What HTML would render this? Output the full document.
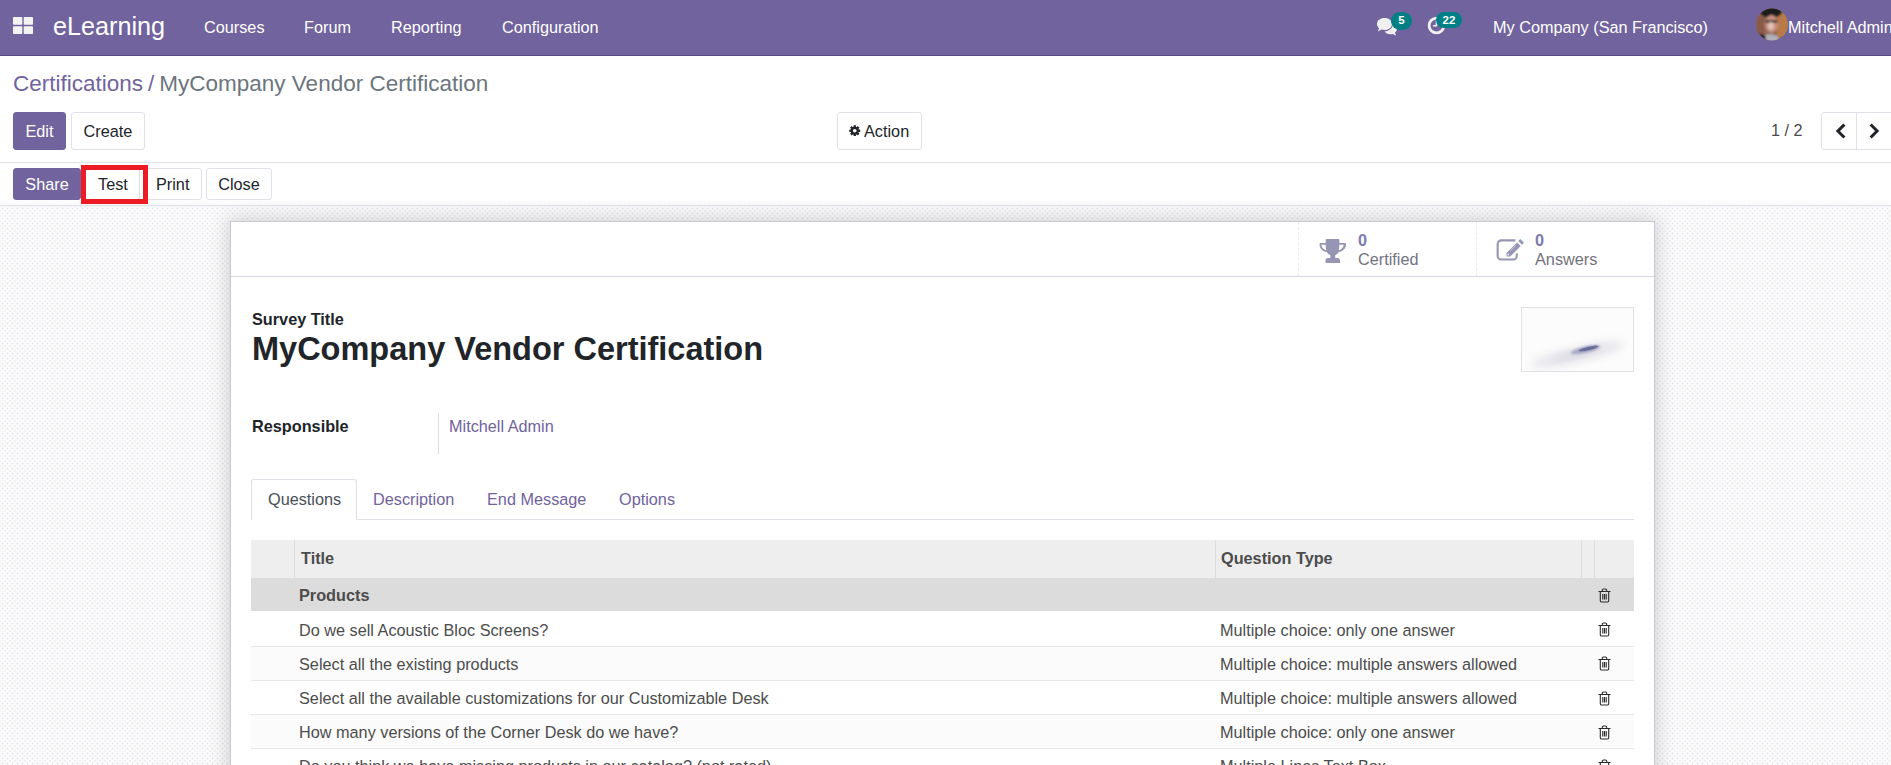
<!DOCTYPE html>
<html><head><meta charset="utf-8">
<style>
*{box-sizing:border-box;margin:0;padding:0}
html,body{width:1891px;height:765px;overflow:hidden;background:#fff;font-family:"Liberation Sans",sans-serif;color:#4c4c4c}
.a{position:absolute;white-space:nowrap}
</style></head>
<body>
<div class="a" style="left:0px;top:0px;width:1891px;height:55px;background:#71639e"></div>
<div class="a" style="left:0px;top:55px;width:1891px;height:1px;background:#574a80"></div>
<svg class="a" style="left:13px;top:17px" width="20" height="17" viewBox="0 0 20 17"><rect x="0" y="0" width="9.3" height="7.7" rx="0.8" fill="#f3f3f3"/><rect x="10.7" y="0" width="9.3" height="7.7" rx="0.8" fill="#f3f3f3"/><rect x="0" y="9.3" width="9.3" height="7.7" rx="0.8" fill="#f3f3f3"/><rect x="10.7" y="9.3" width="9.3" height="7.7" rx="0.8" fill="#f3f3f3"/></svg>
<div class="a" style="left:53px;top:12px;font-size:25.2px;line-height:28.98px;color:#fff;">eLearning</div>
<div class="a" style="left:204px;top:18px;font-size:16.25px;line-height:18.69px;color:#fff;">Courses</div>
<div class="a" style="left:304px;top:18px;font-size:16.25px;line-height:18.69px;color:#fff;">Forum</div>
<div class="a" style="left:391px;top:18px;font-size:16.25px;line-height:18.69px;color:#fff;">Reporting</div>
<div class="a" style="left:502px;top:18px;font-size:16.25px;line-height:18.69px;color:#fff;">Configuration</div>
<div class="a" style="left:1493px;top:18px;font-size:16.25px;line-height:18.69px;color:#fff;">My Company (San Francisco)</div>
<div class="a" style="left:1788px;top:18px;font-size:16.25px;line-height:18.69px;color:#fff;">Mitchell Admin</div>
<svg class="a" style="left:1376px;top:17px" width="22" height="19" viewBox="0 0 22 19"><path fill="#f0f0f0" d="M8.5 1C4 1 1 3.6 1 7c0 1.7.8 3.2 2.1 4.3L1.8 14.5 5.6 12.6c.9.3 1.9.4 2.9.4 4.5 0 7.5-2.6 7.5-6S13 1 8.5 1z"/><path fill="#f0f0f0" d="M16.8 7.2c0 3.9-3.6 6.9-8.3 7.3 1.1 1.6 3.3 2.7 5.8 2.7.8 0 1.6-.1 2.3-.3l3.4 1.6-1-2.9c1.2-.9 1.9-2.1 1.9-3.5 0-2-1.6-3.8-4-4.6z"/></svg>
<div class="a" style="left:1391px;top:11.5px;width:21px;height:18.5px;background:#008084;border-radius:10px"></div>
<div class="a" style="left:1391px;top:14px;font-size:11.5px;line-height:13.22px;color:#fff;font-weight:bold;width:21px;text-align:center;">5</div>
<svg class="a" style="left:1427px;top:16px" width="19" height="19" viewBox="0 0 19 19"><circle cx="9.5" cy="9.5" r="7.4" fill="none" stroke="#f0f0f0" stroke-width="2.8"/><path d="M9.5 4.5v5.3H6" fill="none" stroke="#f0f0f0" stroke-width="1.6"/></svg>
<div class="a" style="left:1436px;top:12px;width:26px;height:16px;background:#008084;border-radius:8px"></div>
<div class="a" style="left:1436px;top:14px;font-size:11.5px;line-height:13.22px;color:#fff;font-weight:bold;width:26px;text-align:center;">22</div>
<svg class="a" style="left:1756px;top:8px" width="32" height="33" viewBox="0 0 32 33"><defs><clipPath id="av"><circle cx="16" cy="16.5" r="16"/></clipPath><filter id="avb"><feGaussianBlur stdDeviation="0.9"/></filter></defs><g clip-path="url(#av)"><rect width="32" height="33" fill="#8e6452"/><g filter="url(#avb)"><rect x="21" y="5" width="13" height="24" fill="#b87a48"/><rect x="0" y="8" width="8" height="20" fill="#8a5a48"/><ellipse cx="15" cy="4" rx="11" ry="6" fill="#1e1a1a"/><ellipse cx="15.5" cy="16" rx="6.5" ry="9" fill="#c89080"/><rect x="9.5" y="12" width="12" height="3" fill="#503838"/><ellipse cx="15" cy="18" rx="3" ry="4" fill="#e0c0b8"/><ellipse cx="14" cy="31" rx="9" ry="5" fill="#b0b0b8"/><ellipse cx="5" cy="30" rx="5" ry="4" fill="#2a2222"/></g></g></svg>
<div class="a" style="left:0px;top:198px;width:1891px;height:7px;background:linear-gradient(#ffffff,#fafafa)"></div>
<div class="a" style="left:13px;top:71px;font-size:22.5px;line-height:26px;color:#71639e">Certifications<span style="margin-left:5px">/</span><span style="margin-left:5px;color:#6c757d">MyCompany Vendor Certification</span></div>
<div class="a" style="left:13px;top:112px;width:53px;height:38px;background:#71639e;color:#fff;border:1px solid #71639e;border-radius:3px;font-size:16.25px;line-height:36px;text-align:center">Edit</div>
<div class="a" style="left:71px;top:112px;width:74px;height:38px;background:#fff;color:#212529;border:1px solid #dee2e6;border-radius:3px;font-size:16.25px;line-height:36px;text-align:center">Create</div>
<div class="a" style="left:837px;top:112px;width:85px;height:38px;background:#fff;color:#212529;border:1px solid #dee2e6;border-radius:3px;font-size:16.25px;line-height:36px;text-align:center"></div>
<div class="a" style="left:864px;top:122px;font-size:16.25px;line-height:18.69px;color:#212529;">Action</div>
<div class="a" style="left:1771px;top:121px;font-size:16.25px;line-height:18.69px;color:#4c4c4c;">1 / 2</div>
<div class="a" style="left:1821px;top:112px;width:80px;height:38px;border:1px solid #dee2e6;border-radius:3px;background:#fff"></div>
<div class="a" style="left:1856px;top:112px;width:1px;height:38px;background:#dee2e6"></div>
<svg class="a" style="left:1834px;top:123px" width="12" height="16" viewBox="0 0 12 16"><path d="M9.3 2.6L3.9 8l5.4 5.4" fill="none" stroke="#212529" stroke-width="3" stroke-linecap="square" stroke-linejoin="miter"/></svg>
<svg class="a" style="left:1868px;top:123px" width="12" height="16" viewBox="0 0 12 16"><path d="M3.7 2.6L9.1 8l-5.4 5.4" fill="none" stroke="#212529" stroke-width="3" stroke-linecap="square" stroke-linejoin="miter"/></svg>
<svg class="a" style="left:849px;top:124.5px" width="11.5" height="11.5" viewBox="-6.3 -6.3 12.6 12.6"><g fill="#212529"><rect x="-1.3" y="-6" width="2.6" height="3" transform="rotate(0)"/><rect x="-1.3" y="-6" width="2.6" height="3" transform="rotate(45)"/><rect x="-1.3" y="-6" width="2.6" height="3" transform="rotate(90)"/><rect x="-1.3" y="-6" width="2.6" height="3" transform="rotate(135)"/><rect x="-1.3" y="-6" width="2.6" height="3" transform="rotate(180)"/><rect x="-1.3" y="-6" width="2.6" height="3" transform="rotate(225)"/><rect x="-1.3" y="-6" width="2.6" height="3" transform="rotate(270)"/><rect x="-1.3" y="-6" width="2.6" height="3" transform="rotate(315)"/><circle r="4.4"/></g><circle r="2" fill="#fff"/></svg>
<div class="a" style="left:0px;top:162px;width:1891px;height:1px;background:#dee2e6"></div>
<div class="a" style="left:13px;top:168px;width:68px;height:32px;background:#71639e;color:#fff;border:1px solid #71639e;border-radius:3px;font-size:16.25px;line-height:30px;text-align:center">Share</div>
<div class="a" style="left:81px;top:168px;width:59px;height:32px;background:#fff;color:#212529;border:1px solid #dee2e6;border-radius:3px;font-size:16.25px;line-height:30px;text-align:center"></div>
<div class="a" style="left:139px;top:168px;width:63px;height:32px;background:#fff;color:#212529;border:1px solid #dee2e6;border-radius:3px;font-size:16.25px;line-height:30px;text-align:center"></div>
<div class="a" style="left:98px;top:175px;font-size:16.25px;line-height:18.69px;color:#212529;">Test</div>
<div class="a" style="left:156px;top:175px;font-size:16.25px;line-height:18.69px;color:#212529;">Print</div>
<div class="a" style="left:206px;top:168px;width:66px;height:32px;background:#fff;color:#212529;border:1px solid #dee2e6;border-radius:3px;font-size:16.25px;line-height:30px;text-align:center">Close</div>
<div class="a" style="left:81px;top:165px;width:67px;height:39px;border:5px solid #ed1c24"></div>
<div class="a" style="left:0px;top:206px;width:1891px;height:559px;background-color:#fcfcfc;background-image:radial-gradient(circle,#e6e8ec 0.8px,transparent 1.3px),radial-gradient(circle,#e6e8ec 0.8px,transparent 1.3px);background-size:5px 5px;background-position:0 0,2.5px 2.5px"></div>
<div class="a" style="left:0px;top:205px;width:1891px;height:1px;background:#dee2e6"></div>
<div class="a" style="left:230px;top:221px;width:1425px;height:600px;background:#fff;border:1px solid #c9c8d6;box-shadow:0 0 18px 2px rgba(0,0,0,.16)"></div>
<div class="a" style="left:231px;top:276px;width:1423px;height:1px;background:#d8d8e2"></div>
<div class="a" style="left:1298px;top:222px;width:1px;height:54px;border-left:1px dashed #ebebf0"></div>
<div class="a" style="left:1476px;top:222px;width:1px;height:54px;border-left:1px dashed #ebebf0"></div>
<svg class="a" style="left:1319px;top:239px" width="27" height="24" viewBox="0 0 27 24"><path fill="#9696b4" d="M7.8 0h11.4c.8 0 1.2.5 1.2 1.2V4h5.4c.7 0 1.2.5 1.2 1.2 0 4.3-3.2 7.4-7.2 7.9-.9 1.5-2.2 2.6-3.6 3.1V19h2.4c1.5 0 2.4 1 2.4 2.4V24H6.5v-2.6C6.5 20 7.4 19 8.9 19h2.4v-2.8c-1.4-.5-2.7-1.6-3.6-3.1C3.7 12.6.5 9.5.5 5.2.5 4.5 1 4 1.7 4h5V1.2C6.6.5 7 0 7.8 0zM2.3 5.7c.3 2.6 2.3 4.9 4.9 5.6-.3-1.6-.5-3.5-.5-5.6zM20.3 5.7c0 2.1-.2 4-.5 5.6 2.6-.7 4.6-3 4.9-5.6z"/></svg>
<div class="a" style="left:1358px;top:231px;font-size:16.25px;line-height:18.69px;color:#7c7bad;font-weight:bold;">0</div>
<div class="a" style="left:1358px;top:250px;font-size:16.25px;line-height:18.69px;color:#727280;">Certified</div>
<svg class="a" style="left:1496px;top:239px" width="29" height="23" viewBox="0 0 29 23"><path fill="none" stroke="#9696b4" stroke-width="2.1" d="M19.4 1.35H5.2C3.2 1.35 1.65 2.9 1.65 4.9v12c0 2 1.55 3.55 3.55 3.55h12c2 0 3.55-1.55 3.55-3.55v-2.7"/><path fill="#9696b4" d="M10.5 17.6v-3.7L21 3.4l3.7 3.7-10.5 10.5z"/><path fill="#9696b4" d="M22.3 2.1l2-2 3.7 3.7-2 2z"/><path fill="none" stroke="#fff" stroke-width="0.7" opacity="0.7" d="M14.6 11.6l5.2-5.2"/><path fill="#fff" opacity="0.8" d="M11.6 16.5v-1.6l1.3-.3.3 1.6z"/></svg>
<div class="a" style="left:1535px;top:231px;font-size:16.25px;line-height:18.69px;color:#7c7bad;font-weight:bold;">0</div>
<div class="a" style="left:1535px;top:250px;font-size:16.25px;line-height:18.69px;color:#727280;">Answers</div>
<div class="a" style="left:252px;top:310px;font-size:16.25px;line-height:18.69px;color:#212529;font-weight:bold;">Survey Title</div>
<div class="a" style="left:252px;top:331px;font-size:32.5px;line-height:37.38px;color:#212529;font-weight:bold;">MyCompany Vendor Certification</div>
<div class="a" style="left:1521px;top:307px;width:113px;height:65px;border:1px solid #dee2e6;background:#fcfcfc"></div>
<svg class="a" style="left:1522px;top:308px" width="111" height="63" viewBox="0 0 111 63"><defs><filter id="b1" x="-50%" y="-50%" width="200%" height="200%"><feGaussianBlur stdDeviation="5"/></filter><filter id="b2" x="-50%" y="-50%" width="200%" height="200%"><feGaussianBlur stdDeviation="1.2"/></filter><filter id="b3" x="-50%" y="-50%" width="200%" height="200%"><feGaussianBlur stdDeviation="0.6"/></filter></defs><g transform="rotate(-13 58 44)"><ellipse cx="55" cy="46" rx="48" ry="7" fill="#e4e4ea" filter="url(#b1)"/><ellipse cx="55" cy="45" rx="26" ry="3" fill="#d6d6e0" filter="url(#b1)"/><ellipse cx="64" cy="43" rx="15" ry="3.2" fill="#a8a8c8" filter="url(#b2)"/><ellipse cx="67" cy="42.5" rx="10" ry="1.8" fill="#6a6a98" filter="url(#b3)"/></g></svg>
<div class="a" style="left:252px;top:417px;font-size:16.25px;line-height:18.69px;color:#212529;font-weight:bold;">Responsible</div>
<div class="a" style="left:438px;top:413px;width:1px;height:41px;background:#dcdcdc"></div>
<div class="a" style="left:449px;top:417px;font-size:16.25px;line-height:18.69px;color:#71639e;">Mitchell Admin</div>
<div class="a" style="left:251px;top:519px;width:1383px;height:1px;background:#dee2e6"></div>
<div class="a" style="left:251px;top:479px;width:106px;height:41px;background:#fff;border:1px solid #dee2e6;border-bottom:none;border-radius:3px 3px 0 0"></div>
<div class="a" style="left:268px;top:490px;font-size:16.25px;line-height:18.69px;color:#495057;">Questions</div>
<div class="a" style="left:373px;top:490px;font-size:16.25px;line-height:18.69px;color:#71639e;">Description</div>
<div class="a" style="left:487px;top:490px;font-size:16.25px;line-height:18.69px;color:#71639e;">End Message</div>
<div class="a" style="left:619px;top:490px;font-size:16.25px;line-height:18.69px;color:#71639e;">Options</div>
<div class="a" style="left:251px;top:540px;width:1383px;height:38px;background:#eeeeee"></div>
<div class="a" style="left:294px;top:540px;width:1px;height:38px;background:#dcdcdc"></div>
<div class="a" style="left:1215px;top:540px;width:1px;height:38px;background:#dcdcdc"></div>
<div class="a" style="left:1581px;top:540px;width:1px;height:38px;background:#dcdcdc"></div>
<div class="a" style="left:1594px;top:540px;width:1px;height:38px;background:#dcdcdc"></div>
<div class="a" style="left:301px;top:549px;font-size:16.25px;line-height:18.69px;color:#4c4c4c;font-weight:bold;">Title</div>
<div class="a" style="left:1221px;top:549px;font-size:16.25px;line-height:18.69px;color:#4c4c4c;font-weight:bold;">Question Type</div>
<div class="a" style="left:251px;top:578px;width:1383px;height:33px;background:#dcdcdc"></div>
<div class="a" style="left:299px;top:586px;font-size:16.25px;line-height:18.69px;color:#4c4c4c;font-weight:bold;">Products</div>
<div class="a" style="left:251px;top:612px;width:1383px;height:35px;background:#fff;"></div>
<div class="a" style="left:299px;top:621px;font-size:16.25px;line-height:18.69px;color:#4c4c4c;">Do we sell Acoustic Bloc Screens?</div>
<div class="a" style="left:1220px;top:621px;font-size:16.25px;line-height:18.69px;color:#4c4c4c;">Multiple choice: only one answer</div>
<div class="a" style="left:251px;top:646px;width:1383px;height:35px;background:#fbfbfb;border-top:1px solid #e6e6e6"></div>
<div class="a" style="left:299px;top:655px;font-size:16.25px;line-height:18.69px;color:#4c4c4c;">Select all the existing products</div>
<div class="a" style="left:1220px;top:655px;font-size:16.25px;line-height:18.69px;color:#4c4c4c;">Multiple choice: multiple answers allowed</div>
<div class="a" style="left:251px;top:680px;width:1383px;height:35px;background:#fff;border-top:1px solid #e6e6e6"></div>
<div class="a" style="left:299px;top:689px;font-size:16.25px;line-height:18.69px;color:#4c4c4c;">Select all the available customizations for our Customizable Desk</div>
<div class="a" style="left:1220px;top:689px;font-size:16.25px;line-height:18.69px;color:#4c4c4c;">Multiple choice: multiple answers allowed</div>
<div class="a" style="left:251px;top:714px;width:1383px;height:35px;background:#fbfbfb;border-top:1px solid #e6e6e6"></div>
<div class="a" style="left:299px;top:723px;font-size:16.25px;line-height:18.69px;color:#4c4c4c;">How many versions of the Corner Desk do we have?</div>
<div class="a" style="left:1220px;top:723px;font-size:16.25px;line-height:18.69px;color:#4c4c4c;">Multiple choice: only one answer</div>
<div class="a" style="left:251px;top:748px;width:1383px;height:35px;background:#fff;border-top:1px solid #e6e6e6"></div>
<div class="a" style="left:299px;top:757px;font-size:16.25px;line-height:18.69px;color:#4c4c4c;">Do you think we have missing products in our catalog? (not rated)</div>
<div class="a" style="left:1220px;top:757px;font-size:16.25px;line-height:18.69px;color:#4c4c4c;">Multiple Lines Text Box</div>
<svg class="a" style="left:1598px;top:588px" width="13" height="15" viewBox="0 0 13 15"><path fill="none" stroke="#2a2a2a" stroke-width="1.1" d="M.5 3.5h12M4.3 3.5V2.2c0-.7.5-1.2 1.2-1.2h2c.7 0 1.2.5 1.2 1.2v1.3M2.3 3.5v9.3c0 .7.4 1.2 1 1.2h6.4c.6 0 1-.5 1-1.2V3.5M4.8 6v5.5M6.5 6v5.5M8.2 6v5.5"/></svg>
<svg class="a" style="left:1598px;top:622px" width="13" height="15" viewBox="0 0 13 15"><path fill="none" stroke="#2a2a2a" stroke-width="1.1" d="M.5 3.5h12M4.3 3.5V2.2c0-.7.5-1.2 1.2-1.2h2c.7 0 1.2.5 1.2 1.2v1.3M2.3 3.5v9.3c0 .7.4 1.2 1 1.2h6.4c.6 0 1-.5 1-1.2V3.5M4.8 6v5.5M6.5 6v5.5M8.2 6v5.5"/></svg>
<svg class="a" style="left:1598px;top:656px" width="13" height="15" viewBox="0 0 13 15"><path fill="none" stroke="#2a2a2a" stroke-width="1.1" d="M.5 3.5h12M4.3 3.5V2.2c0-.7.5-1.2 1.2-1.2h2c.7 0 1.2.5 1.2 1.2v1.3M2.3 3.5v9.3c0 .7.4 1.2 1 1.2h6.4c.6 0 1-.5 1-1.2V3.5M4.8 6v5.5M6.5 6v5.5M8.2 6v5.5"/></svg>
<svg class="a" style="left:1598px;top:691px" width="13" height="15" viewBox="0 0 13 15"><path fill="none" stroke="#2a2a2a" stroke-width="1.1" d="M.5 3.5h12M4.3 3.5V2.2c0-.7.5-1.2 1.2-1.2h2c.7 0 1.2.5 1.2 1.2v1.3M2.3 3.5v9.3c0 .7.4 1.2 1 1.2h6.4c.6 0 1-.5 1-1.2V3.5M4.8 6v5.5M6.5 6v5.5M8.2 6v5.5"/></svg>
<svg class="a" style="left:1598px;top:725px" width="13" height="15" viewBox="0 0 13 15"><path fill="none" stroke="#2a2a2a" stroke-width="1.1" d="M.5 3.5h12M4.3 3.5V2.2c0-.7.5-1.2 1.2-1.2h2c.7 0 1.2.5 1.2 1.2v1.3M2.3 3.5v9.3c0 .7.4 1.2 1 1.2h6.4c.6 0 1-.5 1-1.2V3.5M4.8 6v5.5M6.5 6v5.5M8.2 6v5.5"/></svg>
<svg class="a" style="left:1598px;top:759px" width="13" height="15" viewBox="0 0 13 15"><path fill="none" stroke="#2a2a2a" stroke-width="1.1" d="M.5 3.5h12M4.3 3.5V2.2c0-.7.5-1.2 1.2-1.2h2c.7 0 1.2.5 1.2 1.2v1.3M2.3 3.5v9.3c0 .7.4 1.2 1 1.2h6.4c.6 0 1-.5 1-1.2V3.5M4.8 6v5.5M6.5 6v5.5M8.2 6v5.5"/></svg>
</body></html>
